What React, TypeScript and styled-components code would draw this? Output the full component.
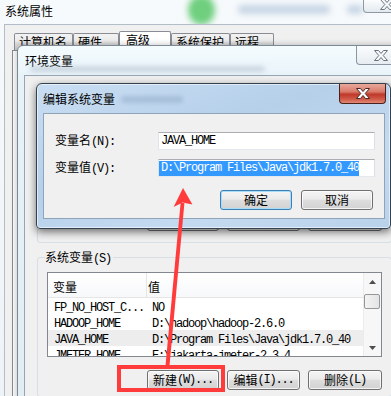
import React from "react";
import styled, { createGlobalStyle, css } from "styled-components";

const GlobalStyle = createGlobalStyle`
  html, body {
    margin: 0;
    padding: 0;
    overflow: hidden;
    background: #fff;
  }
`;

const Screen = styled.div`
  position: relative;
  width: 391px;
  height: 396px;
  overflow: hidden;
  background: linear-gradient(180deg, #f7fafc 0%, #eef3f7 100%);
  font-family: "Noto Sans CJK SC", sans-serif;
  font-size: 12px;
  line-height: 16px;
  color: #000;
`;

const Latin = styled.span`
  font-family: "Liberation Mono", monospace;
  font-size: 12px;
  letter-spacing: -1.2px;
`;

/* ---------- 系统属性 (back window) ---------- */

const SysWindow = styled.div`
  display: flex;
  flex-direction: column;
  height: 100%;
`;

const SysTitleBar = styled.div`
  position: relative;
  height: 24px;
  display: flex;
  align-items: flex-start;
  padding-left: 5px;
`;

const WindowTitle = styled.div`
  position: relative;
  z-index: 1;
  padding-top: 3px;
`;

const GreenGlow = styled.div`
  position: absolute;
  left: 188px;
  top: -5px;
  width: 27px;
  height: 30px;
  border-radius: 50%;
  background: #6fcf7f;
  filter: blur(3px);
`;

const BackdropText = styled.div<{ $left: number; $width: number }>`
  position: absolute;
  left: ${(p) => p.$left}px;
  top: 5px;
  width: ${(p) => p.$width}px;
  height: 9px;
  border-radius: 4px;
  background: #9fb6d2;
  opacity: 0.55;
  filter: blur(3px);
`;

const SysClose = styled.div`
  position: relative;
  margin-left: auto;
  margin-right: -19px;
  width: 47px;
  height: 13px;
  box-sizing: border-box;
  border: 1px solid #8e99a4;
  border-top: none;
  border-radius: 0 0 4px 4px;
  background: linear-gradient(180deg, #fbfdfe, #e3e9ee);
  display: flex;
  align-items: flex-end;
  justify-content: center;
  padding-bottom: 2px;
`;

const SysClient = styled.div`
  position: relative;
  flex: 1;
  margin-left: 4px;
  border-top: 1px solid #b3bdc7;
  border-left: 1px solid #b3bdc7;
  background: #f0f0f0;
  padding: 6px 0 0 7px;
  display: flex;
  flex-direction: column;
`;

const TabRow = styled.div`
  display: flex;
  align-items: flex-end;
  padding-left: 2px;
`;

const Tab = styled.div<{ $w: number; $active?: boolean }>`
  width: ${(p) => p.$w}px;
  height: 17px;
  box-sizing: border-box;
  padding: 0 0 0 4px;
  border: 1px solid #898c95;
  border-bottom: none;
  border-radius: 2px 2px 0 0;
  background: linear-gradient(180deg, #f2f2f2 0%, #ebebeb 45%, #dddddd 55%, #cfcfcf 100%);
  white-space: nowrap;
  ${(p) =>
    p.$active &&
    css`
      height: 19px;
      padding-left: 6px;
      background: #ffffff;
    `}
`;

const TabPanel = styled.div`
  flex: 1;
  border-top: 1px solid #898c95;
  border-left: 1px solid #898c95;
  background: #fbfbfb;
`;

/* ---------- 环境变量 (middle window) ---------- */

const EnvWindow = styled.div`
  position: absolute;
  left: 17px;
  top: 45px;
  width: 390px;
  height: 370px;
  box-sizing: border-box;
  border: 1px solid #7d8995;
  border-radius: 6px 6px 0 0;
  background: linear-gradient(180deg, #f5fcff 0%, #e8f3f9 30px, #e1ecf3 100%);
  box-shadow: 0 0 6px rgba(0, 0, 0, 0.25);
  padding-left: 6px;
  display: flex;
  flex-direction: column;
`;

const EnvTitleBar = styled.div`
  position: relative;
  height: 29px;
  display: flex;
  align-items: center;
  padding-left: 1px;
`;

const EnvTitleBlur = styled.div`
  position: absolute;
  left: 6px;
  top: 20px;
  width: 235px;
  height: 6px;
  border-radius: 3px;
  background: #a9b7c6;
  opacity: 0.5;
  filter: blur(2.5px);
`;

const EnvClose = styled.div`
  align-self: flex-start;
  margin-left: auto;
  width: 50px;
  height: 19px;
  box-sizing: border-box;
  border: 1px solid #8b96a2;
  border-top: none;
  border-radius: 0 0 4px 4px;
  background: linear-gradient(180deg, #fbfdfe, #e6ecf1);
  display: flex;
  align-items: center;
  justify-content: center;
`;

const EnvClient = styled.div`
  flex: 1;
  border-top: 1px solid #97a4b1;
  border-left: 1px solid #97a4b1;
  background: #f0f0f0;
  padding: 7px 0 0 12px;
  display: flex;
  flex-direction: column;
`;

const GroupBox = styled.div<{ $height?: number }>`
  width: 355px;
  box-sizing: border-box;
  ${(p) => p.$height && `height: ${p.$height}px;`}
  border: 1px solid #d5dfe5;
  border-radius: 3px;
  padding: 0 9px 6px 9px;
  display: flex;
  flex-direction: column;
  & + & {
    margin-top: 14px;
  }
`;

const GroupLabel = styled.div`
  align-self: flex-start;
  margin: -9px 0 0 -2px;
  padding-right: 2px;
  background: #f0f0f0;
`;

const Spacer = styled.div`
  flex: 1;
`;

const ButtonRow = styled.div<{ $gap: number; $top: number; $bottom?: number }>`
  display: flex;
  justify-content: flex-end;
  gap: ${(p) => p.$gap}px;
  margin-top: ${(p) => p.$top}px;
  margin-bottom: ${(p) => p.$bottom ?? 0}px;
`;

const Button = styled.div<{ $w: number; $default?: boolean }>`
  width: ${(p) => p.$w}px;
  height: 20px;
  box-sizing: border-box;
  border: 1px solid #707070;
  border-radius: 3px;
  background: linear-gradient(180deg, #f4f4f4 0%, #ebebeb 45%, #dddddd 52%, #d2d2d2 100%);
  box-shadow: inset 0 0 0 1px rgba(255, 255, 255, 0.75);
  display: flex;
  align-items: center;
  justify-content: center;
  white-space: nowrap;
  ${(p) =>
    p.$default &&
    css`
      border-color: #3c7fb1;
      box-shadow: inset 0 0 0 1px #a6dcf8;
    `}
`;

const ListView = styled.div`
  margin-top: 5px;
  height: 85px;
  box-sizing: border-box;
  border: 1px solid #828790;
  background: #fff;
  display: flex;
  overflow: hidden;
`;

const ListBody = styled.div`
  flex: 1;
  min-width: 0;
  display: flex;
  flex-direction: column;
`;

const HeaderRow = styled.div`
  display: flex;
  height: 25px;
  flex-shrink: 0;
  box-sizing: border-box;
  border-bottom: 1px solid #e5e5e5;
  background: linear-gradient(180deg, #ffffff, #f7f8fa);
`;

const HeaderCell = styled.div<{ $first?: boolean }>`
  padding: 6px 0 0 1px;
  ${(p) =>
    p.$first &&
    css`
      width: 99px;
      padding-left: 5px;
      box-sizing: border-box;
      border-right: 1px solid #e5e5e5;
    `}
`;

const DataRow = styled.div<{ $selected?: boolean }>`
  display: flex;
  height: 16px;
  flex-shrink: 0;
  white-space: nowrap;
  background: ${(p) => (p.$selected ? "#ededed" : "transparent")};
`;

const NameCell = styled.div`
  width: 104px;
  padding-left: 6px;
  box-sizing: border-box;
  overflow: hidden;
`;

const ValueCell = styled.div`
  flex: 1;
  overflow: hidden;
`;

const ScrollBar = styled.div`
  width: 17px;
  flex-shrink: 0;
  border-left: 1px solid #ececec;
  background: #f7f7f7;
  display: flex;
  flex-direction: column;
`;

const ScrollArrow = styled.div`
  height: 17px;
  display: flex;
  align-items: center;
  justify-content: center;
`;

const ScrollThumb = styled.div`
  margin: 4px 1px 0 0;
  height: 15px;
  box-sizing: border-box;
  border: 1px solid #979797;
  border-radius: 2px;
  background: linear-gradient(90deg, #f3f3f3, #e4e4e4);
`;

/* ---------- 编辑系统变量 (front dialog) ---------- */

const EditWindow = styled.div`
  position: absolute;
  left: 36px;
  top: 83px;
  width: 355px;
  height: 146px;
  box-sizing: border-box;
  border: 1px solid #34414f;
  border-radius: 6px 6px 4px 4px;
  background: linear-gradient(160deg, #c9def3 0%, #b6d0ea 40%, #c4daf0 70%, #b9d2eb 100%);
  box-shadow: 0 3px 9px rgba(0, 0, 0, 0.55), inset 0 0 0 1px rgba(255, 255, 255, 0.55);
  padding: 0 5px 9px 6px;
  display: flex;
  flex-direction: column;
`;

const EditTitleBar = styled.div`
  position: relative;
  height: 29px;
  display: flex;
  align-items: center;
`;

const EditTitleBlur = styled.div`
  position: absolute;
  left: 78px;
  top: 12px;
  width: 62px;
  height: 7px;
  border-radius: 3px;
  background: #8aa3bf;
  opacity: 0.45;
  filter: blur(2px);
`;

const EditClose = styled.div`
  align-self: flex-start;
  margin-left: auto;
  margin-right: -1px;
  width: 47px;
  height: 20px;
  box-sizing: border-box;
  border: 1px solid #4b211c;
  border-top: none;
  border-radius: 0 0 4px 4px;
  background: linear-gradient(180deg, #e9a99c 0%, #d87b6b 40%, #c0392a 55%, #cf5a48 80%, #e08a75 100%);
  display: flex;
  align-items: center;
  justify-content: center;
`;

const EditBody = styled.div`
  flex: 1;
  border: 1px solid #8fa3b9;
  background: #f0f0f0;
  padding: 18px 9px 0 11px;
  display: flex;
  flex-direction: column;
`;

const FieldRow = styled.div`
  display: flex;
  align-items: center;
  height: 18px;
  & + & {
    margin-top: 9px;
  }
`;

const FieldLabel = styled.div`
  flex: 1;
  white-space: nowrap;
`;

const TextBox = styled.div`
  width: 217px;
  height: 18px;
  box-sizing: border-box;
  border: 1px solid;
  border-color: #abadb3 #dbdfe6 #e3e9ef #e2e3ea;
  background: #fff;
  display: flex;
  align-items: center;
  overflow: hidden;
  white-space: nowrap;
`;

const InputText = styled(Latin)<{ $selected?: boolean }>`
  padding-left: 2px;
  line-height: 15px;
  ${(p) =>
    p.$selected &&
    css`
      background: #3399ff;
      color: #fff;
    `}
`;

/* ---------- annotations ---------- */

const RedBox = styled.div`
  position: absolute;
  left: 117px;
  top: 365px;
  width: 108px;
  height: 27px;
  box-sizing: border-box;
  border: 4px solid #ff3b3b;
`;

const ArrowLayer = styled.svg`
  position: absolute;
  left: 0;
  top: 0;
  pointer-events: none;
`;

function CloseGlyph({ fill, stroke }: { fill: string; stroke: string }) {
  return (
    <svg width="14" height="11" viewBox="0 0 14 11">
      <polygon
        points="0.5,0.5 4.5,0.5 7,3.5 9.5,0.5 13.5,0.5 9.2,5.5 13.5,10.5 9.5,10.5 7,7.5 4.5,10.5 0.5,10.5 4.8,5.5"
        fill={fill}
        stroke={stroke}
        strokeWidth="1"
        strokeLinejoin="round"
      />
    </svg>
  );
}

function Triangle({ up }: { up?: boolean }) {
  return (
    <svg width="7" height="4" viewBox="0 0 7 4">
      <polygon points={up ? "0,4 7,4 3.5,0" : "0,0 7,0 3.5,4"} fill="#4d4d4d" />
    </svg>
  );
}

const systemVars = [
  { name: "FP_NO_HOST_C...", value: "NO" },
  { name: "HADOOP_HOME", value: "D:\\hadoop\\hadoop-2.6.0" },
  { name: "JAVA_HOME", value: "D:\\Program Files\\Java\\jdk1.7.0_40", selected: true },
  { name: "JMETER_HOME", value: "E:\\jakarta-jmeter-2.3.4" },
];

function ActionButtons({ top, bottom }: { top: number; bottom?: number }) {
  return (
    <ButtonRow $gap={8} $top={top} $bottom={bottom}>
      <Button $w={72}>
        新建<Latin>(W)...</Latin>
      </Button>
      <Button $w={73}>
        编辑<Latin>(I)...</Latin>
      </Button>
      <Button $w={74}>
        删除<Latin>(L)</Latin>
      </Button>
    </ButtonRow>
  );
}

export default function App() {
  return (
    <Screen>
      <GlobalStyle />

      <SysWindow>
        <SysTitleBar>
          <GreenGlow />
          <BackdropText $left={238} $width={92} />
          <BackdropText $left={347} $width={16} />
          <WindowTitle>系统属性</WindowTitle>
          <SysClose>
            <CloseGlyph fill="#f4f6f8" stroke="#6c7783" />
          </SysClose>
        </SysTitleBar>
        <SysClient>
          <TabRow>
            <Tab $w={59}>计算机名</Tab>
            <Tab $w={46}>硬件</Tab>
            <Tab $w={52} $active>
              高级
            </Tab>
            <Tab $w={59}>系统保护</Tab>
            <Tab $w={44}>远程</Tab>
          </TabRow>
          <TabPanel />
        </SysClient>
      </SysWindow>

      <EnvWindow>
        <EnvTitleBar>
          <EnvTitleBlur />
          环境变量
          <EnvClose>
            <CloseGlyph fill="#f7f9fa" stroke="#66717d" />
          </EnvClose>
        </EnvTitleBar>
        <EnvClient>
          <GroupBox $height={160}>
            <Spacer />
            <ActionButtons top={0} bottom={5} />
          </GroupBox>
          <GroupBox>
            <GroupLabel>
              系统变量<Latin>(S)</Latin>
            </GroupLabel>
            <ListView>
              <ListBody>
                <HeaderRow>
                  <HeaderCell $first>变量</HeaderCell>
                  <HeaderCell>值</HeaderCell>
                </HeaderRow>
                {systemVars.map((v) => (
                  <DataRow key={v.name} $selected={v.selected}>
                    <NameCell>
                      <Latin>{v.name}</Latin>
                    </NameCell>
                    <ValueCell>
                      <Latin>{v.value}</Latin>
                    </ValueCell>
                  </DataRow>
                ))}
              </ListBody>
              <ScrollBar>
                <ScrollArrow>
                  <Triangle up />
                </ScrollArrow>
                <ScrollThumb />
                <Spacer />
                <ScrollArrow>
                  <Triangle />
                </ScrollArrow>
              </ScrollBar>
            </ListView>
            <ActionButtons top={13} />
          </GroupBox>
        </EnvClient>
      </EnvWindow>

      <EditWindow>
        <EditTitleBar>
          <EditTitleBlur />
          编辑系统变量
          <EditClose>
            <CloseGlyph fill="#ffffff" stroke="#4a2a26" />
          </EditClose>
        </EditTitleBar>
        <EditBody>
          <FieldRow>
            <FieldLabel>
              变量名<Latin>(N):</Latin>
            </FieldLabel>
            <TextBox>
              <InputText>JAVA_HOME</InputText>
            </TextBox>
          </FieldRow>
          <FieldRow>
            <FieldLabel>
              变量值<Latin>(V):</Latin>
            </FieldLabel>
            <TextBox>
              <InputText $selected>D:\Program Files\Java\jdk1.7.0_40</InputText>
            </TextBox>
          </FieldRow>
          <ButtonRow $gap={9} $top={13}>
            <Button $w={72} $default>
              确定
            </Button>
            <Button $w={72} style={{ marginRight: 2 }}>
              取消
            </Button>
          </ButtonRow>
        </EditBody>
      </EditWindow>

      <RedBox />
      <ArrowLayer width={391} height={396} viewBox="0 0 391 396">
        <polygon points="165.3,368 169.3,368 184.4,203 180.6,203" fill="#ff3b3b" />
        <polygon points="183,188 173.6,207 182.6,202.5 192.4,204.5" fill="#ff3b3b" />
      </ArrowLayer>
    </Screen>
  );
}
